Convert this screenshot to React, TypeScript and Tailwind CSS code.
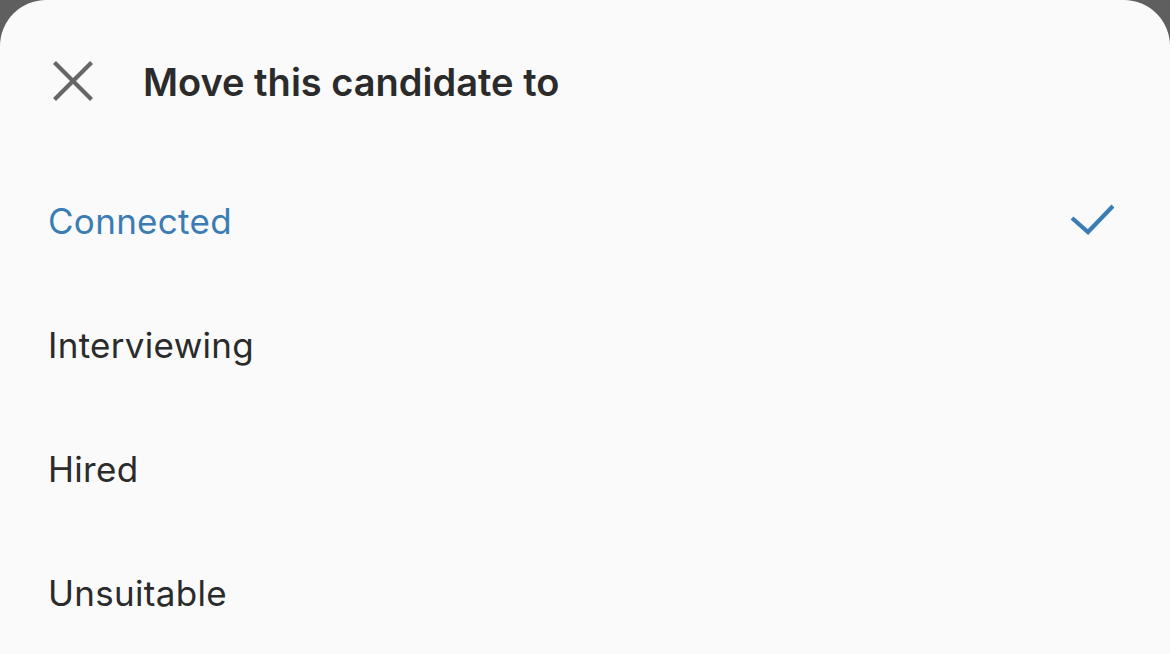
import React from "react";

export default function App() {
  const items = [
    { label: "Connected", selected: true },
    { label: "Interviewing", selected: false },
    { label: "Hired", selected: false },
    { label: "Unsuitable", selected: false },
  ];
  return (
    <div className="w-[1170px] h-[654px] bg-[#5f5f5f] overflow-hidden" style={{ fontFamily: "Inter, 'Noto Sans', sans-serif" }}>
      <div className="w-full h-full bg-[#fafafa] rounded-t-[46px]">
        <div className="flex items-start h-[159px] pl-[52px] pt-[60px]">
          <svg width="42" height="42" viewBox="0 0 42 42" className="shrink-0">
            <path d="M2.5 2.5 L39.5 39.5 M39.5 2.5 L2.5 39.5" stroke="#666666" strokeWidth="4.2" />
          </svg>
          <div className="ml-[49px] mt-[3px] text-[38px] font-semibold text-[#2b2b2b] leading-none">Move this candidate to</div>
        </div>
        <div className="flex flex-col">
          {items.map((it) => (
            <div key={it.label} className="flex items-center justify-between h-[124px] pl-[48px] pr-[56px]">
              <span className={`text-[35px] tracking-[0.3px] leading-none ${it.selected ? "text-[#3a7db4]" : "text-[#2b2b2b]"}`}>{it.label}</span>
              {it.selected && (
                <svg width="44" height="32" viewBox="0 0 44 32" className="mb-[4px]">
                  <path d="M2 15 L18 29 L43 3" stroke="#3a7db4" strokeWidth="4.2" fill="none" />
                </svg>
              )}
            </div>
          ))}
        </div>
      </div>
    </div>
  );
}
